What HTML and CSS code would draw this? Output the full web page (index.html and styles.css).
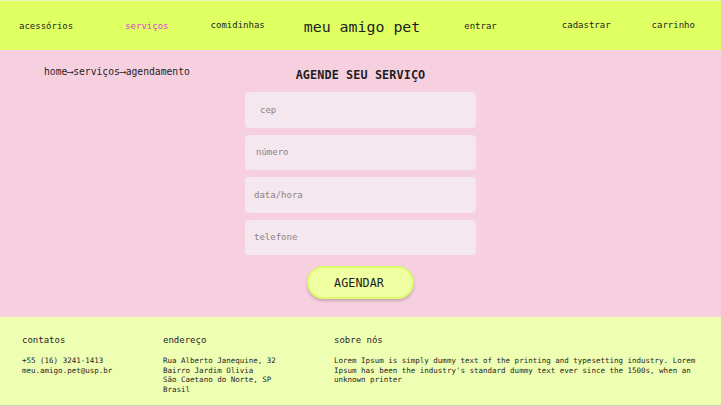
FILE: index.html
```html
<!DOCTYPE html>
<html lang="pt-BR">
<head>
<meta charset="utf-8">
<title>meu amigo pet - agendamento</title>
<link rel="stylesheet" href="styles.css">
</head>
<body>
<header class="topbar">
  <nav class="nav">
    <a class="nav-item i-acess" href="#">acessórios</a>
    <a class="nav-item i-serv active" href="#">serviços</a>
    <a class="nav-item i-comid up" href="#">comidinhas</a>
    <a class="brand" href="#">meu amigo pet</a>
    <a class="nav-item i-entrar" href="#">entrar</a>
    <a class="nav-item i-cad up" href="#">cadastrar</a>
    <a class="nav-item i-carr up" href="#">carrinho</a>
  </nav>
</header>
<main class="main">
  <div class="crumbs">home⟶serviços⟶agendamento</div>
  <form class="form">
    <h1 class="title">AGENDE SEU SERVIÇO</h1>
    <input class="field f-cep" type="text" placeholder="cep">
    <input class="field f-num" type="text" placeholder="número">
    <input class="field" type="text" placeholder="data/hora">
    <input class="field" type="text" placeholder="telefone">
    <button class="btn" type="button">AGENDAR</button>
  </form>
  <div></div>
</main>
<footer class="footer">
  <section class="col c-contatos">
    <h2 class="col-title">contatos</h2>
    <p class="col-text">+55 (16) 3241-1413<br>meu.amigo.pet@usp.br</p>
  </section>
  <section class="col c-end">
    <h2 class="col-title">endereço</h2>
    <p class="col-text">Rua Alberto Janequine, 32<br>Bairro Jardim Olivia<br>São Caetano do Norte, SP<br>Brasil</p>
  </section>
  <section class="col c-sobre">
    <h2 class="col-title">sobre nós</h2>
    <p class="col-text">Lorem Ipsum is simply dummy text of the printing and typesetting industry. Lorem Ipsum has been the industry's standard dummy text ever since the 1500s, when an unknown printer</p>
  </section>
</footer>
</body>
</html>
```
FILE: styles.css
```css
* { box-sizing: border-box; }
html, body { margin: 0; padding: 0; }
body {
  width: 721px;
  height: 406px;
  overflow: hidden;
  font-family: "DejaVu Sans Mono", "Liberation Mono", monospace;
  color: #1e1e1e;
  background: #f6d0df;
}
a { color: inherit; text-decoration: none; }

.topbar {
  height: 50px;
  background: #dfff63;
  border-top: 1px solid #e8f3bf;
}
.nav {
  display: flex;
  align-items: center;
  height: 49px;
  padding-left: 19px;
}
.nav-item {
  font-size: 9px;
  line-height: 12px;
  margin-top: 1px;
}
.nav-item.up { margin-top: -1px; }
.i-serv { margin-left: 52px; }
.i-comid { margin-left: 42px; }
.brand { margin-left: 39px; font-size: 14.9px; line-height: 18px; margin-top: 2px; }
.i-entrar { margin-left: 44px; }
.i-cad { margin-left: 65px; }
.i-carr { margin-left: 41px; }
.active { color: #dc3fcd; }

.main {
  height: 267px;
  display: grid;
  grid-template-columns: 1fr 231px 1fr;
}
.crumbs {
  padding: 16px 0 0 44px;
  font-size: 9.7px;
  line-height: 12px;
}
.form {
  display: flex;
  flex-direction: column;
  align-items: center;
}
.title {
  margin: 18px 0 0;
  font-size: 11.8px;
  line-height: 14px;
  font-weight: bold;
  letter-spacing: 0.1px;
  height: 24px;
}
.field {
  width: 231px;
  height: 35.5px;
  margin-bottom: 7px;
  border: none;
  border-radius: 4px;
  background: #f4e7ee;
  padding: 0 9px;
  font-family: inherit;
  font-size: 9px;
  color: #333;
  outline: none;
}
.field::placeholder { color: #8a8387; }
.f-cep { padding-left: 15px; }
.f-num { padding-left: 11px; }
.btn {
  margin-top: 4px;
  width: 107px;
  height: 33px;
  border-radius: 17px;
  background: #efffa2;
  border: 2px solid #dcfc6a;
  box-shadow: 0 2px 3px rgba(120, 80, 100, 0.35);
  font-family: inherit;
  font-size: 11.7px;
  color: #1e1e1e;
  letter-spacing: 0.1px;
  padding: 0 3px 0 0;
}

.footer {
  height: 89px;
  background: #eeffb4;
  border-bottom: 1px solid #c9d0aa;
  display: flex;
  padding: 17px 0 0 22px;
}
.col-title {
  margin: 0;
  font-size: 9px;
  font-weight: normal;
  line-height: 12px;
}
.col-text {
  margin: 10px 0 0;
  font-size: 7.5px;
  line-height: 9.7px;
}
.c-contatos { width: 141px; }
.c-end { width: 171px; }
.c-sobre { width: 375px; }
```
